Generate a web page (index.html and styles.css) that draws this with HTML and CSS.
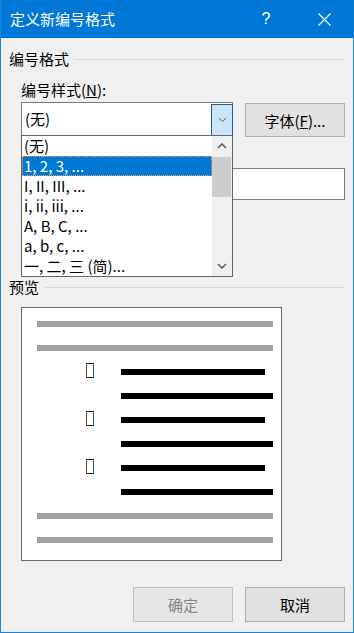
FILE: index.html
```html
<!DOCTYPE html>
<html lang="zh-CN">
<head>
  <meta charset="UTF-8" />
  <meta name="viewport" content="width=device-width, initial-scale=1.0"/>
  <title>定义新编号格式</title>
  <link rel="stylesheet" href="styles.css">
</head>
<body>

  <div class="window">
    <div class="titlebar">
      <div class="title">定义新编号格式</div>
      <div class="caption-btn help">?</div>
      <div class="caption-btn close">
        <svg width="13" height="13" viewBox="0 0 13 13">
          <path d="M0.5 0.5 L12.5 12.5 M12.5 0.5 L0.5 12.5" stroke="#fff" stroke-width="1.1" fill="none"/>
        </svg>
      </div>
    </div>

    <div class="content">
      <div class="group-head">
        <span>编号格式</span>
        <div class="group-line"></div>
      </div>

      <div class="field-label">编号样式(<u>N</u>):</div>
      <div class="combo-row">
        <div class="combo">
          <div class="combo-text">(无)</div>
          <div class="combo-btn">
            <svg width="9" height="6" viewBox="0 0 9 6">
              <path d="M1 1 L4.5 4.5 L8 1" stroke="#606060" stroke-width="1" fill="none"/>
            </svg>
          </div>

          <div class="droplist">
            <div class="items">
              <div class="item">(无)</div>
              <div class="item selected">1, 2, 3, ...</div>
              <div class="item">I, II, III, ...</div>
              <div class="item">i, ii, iii, ...</div>
              <div class="item">A, B, C, ...</div>
              <div class="item">a, b, c, ...</div>
              <div class="item">一, 二, 三 (简)...</div>
            </div>
            <div class="scrollbar">
              <div class="scroll-arrow">
                <svg width="10" height="6" viewBox="0 0 10 6">
                  <path d="M1 5 L5 1 L9 5" stroke="#606060" stroke-width="1.6" fill="none"/>
                </svg>
              </div>
              <div class="thumb"></div>
              <div class="scroll-space"></div>
              <div class="scroll-arrow">
                <svg width="10" height="6" viewBox="0 0 10 6">
                  <path d="M1 1 L5 5 L9 1" stroke="#606060" stroke-width="1.6" fill="none"/>
                </svg>
              </div>
            </div>
          </div>
        </div>
        <button class="btn">字体(<u>F</u>)...</button>
      </div>

      <!-- label for the format box sits under the open list -->
      <div class="field-label second"></div>
      <div class="textbox"></div>

      <div class="field-label second"></div>
      <div class="combo small"></div>

      <div class="group-head preview-head">
        <span>预览</span>
        <div class="group-line"></div>
      </div>

      <div class="preview">
        <div class="bar gray"></div>
        <div class="bar gray"></div>
        <div class="prow"><span class="tofu"></span><div class="bar black short"></div></div>
        <div class="prow"><div class="bar black long"></div></div>
        <div class="prow"><span class="tofu"></span><div class="bar black short"></div></div>
        <div class="prow"><div class="bar black long"></div></div>
        <div class="prow"><span class="tofu"></span><div class="bar black short"></div></div>
        <div class="prow"><div class="bar black long"></div></div>
        <div class="bar gray"></div>
        <div class="bar gray"></div>
      </div>
    </div>

    <div class="footer">
      <button class="btn big" disabled>确定</button>
      <button class="btn big">取消</button>
    </div>
  </div>

</body>
</html>
```

FILE: styles.css
```css
body {
  margin: 0;
  font-family: "Noto Sans CJK SC", "Noto Sans", sans-serif;
  font-size: 15px;
  color: #000;
  background: #f0f0f0;
}

.window {
  width: 354px;
  height: 633px;
  box-sizing: border-box;
  border: 1px solid #1883d7;
  border-top: none;
  background: #f0f0f0;
  display: flex;
  flex-direction: column;
}

.titlebar {
  height: 38px;
  background: #0078d7;
  color: white;
  display: flex;
  align-items: center;
  padding-left: 9px;
}

.title {
  flex: 1;
  line-height: 38px;
}

.caption-btn {
  width: 58px;
  height: 38px;
  display: flex;
  align-items: center;
  justify-content: center;
}

.help {
  font-family: "Liberation Sans", sans-serif;
  font-size: 16px;
}

.content {
  padding: 0 8px;
}

.group-head {
  margin-top: 11px;
  height: 20px;
  display: flex;
  align-items: center;
  gap: 5px;
  line-height: 20px;
}

.group-line {
  flex: 1;
  height: 1px;
  background: #dcdcdc;
}

.field-label {
  margin-top: 11px;
  height: 20px;
  line-height: 20px;
  padding-left: 12px;
}

.field-label.second {
  margin-top: 9px;
}

.combo-row {
  margin-top: 2px;
  padding-left: 12px;
  display: flex;
  gap: 12px;
  align-items: flex-start;
}

.combo {
  position: relative;
  width: 212px;
  height: 34px;
  box-sizing: border-box;
  border: 1px solid #7a7a7a;
  background: white;
  display: flex;
}

.combo.small {
  margin: 2px 0 0 12px;
  width: 180px;
}

.combo-text {
  flex: 1;
  padding-left: 3px;
  line-height: 31px;
}

.combo-btn {
  width: 22px;
  box-sizing: border-box;
  margin: 1px -1px -1px 0;
  border: 1px solid #1f5f99;
  background: #cce4f7;
  display: flex;
  align-items: center;
  justify-content: center;
}

.droplist {
  position: absolute;
  top: 32px;
  left: -1px;
  width: 212px;
  height: 142px;
  box-sizing: border-box;
  border: 1px solid #646464;
  background: white;
  display: flex;
  z-index: 5;
}

.items {
  width: 190px;
  overflow: hidden;
}

.item {
  height: 20px;
  line-height: 20px;
  padding-left: 2px;
  white-space: nowrap;
}

.item.selected {
  background: #0078d7;
  color: white;
  outline: 1px dotted #f5a040;
  outline-offset: -1px;
}

.scrollbar {
  width: 20px;
  background: #f0f0f0;
  display: flex;
  flex-direction: column;
}

.scroll-arrow {
  height: 20px;
  display: flex;
  align-items: center;
  justify-content: center;
}

.thumb {
  margin-top: 1px;
  height: 40px;
  width: 19px;
  background: #cdcdcd;
}

.scroll-space {
  flex: 1;
}

.btn {
  font-family: "Noto Sans CJK SC", "Noto Sans", sans-serif;
  font-size: 15px;
  color: #000;
  width: 100px;
  height: 34px;
  margin-top: 1px;
  padding: 0;
  background: #e1e1e1;
  border: 1px solid #adadad;
}

.btn.big {
  height: 35px;
  margin-top: 0;
}

.btn:disabled {
  background: #e6e6e6;
  border-color: #bfbfbf;
  color: #838383;
}

.textbox {
  margin: 2px 0 0 12px;
  height: 32px;
  box-sizing: border-box;
  border: 1px solid #7a7a7a;
  background: white;
}

.preview-head {
  margin-top: 12px;
}

.preview {
  margin: 10px 0 0 12px;
  width: 261px;
  height: 254px;
  box-sizing: border-box;
  border: 1px solid #696969;
  background: white;
  padding: 13px 0 0 15px;
  display: flex;
  flex-direction: column;
  gap: 18px;
}

.bar {
  height: 6px;
  flex-shrink: 0;
}

.bar.gray {
  width: 236px;
  background: #a0a0a0;
}

.bar.black {
  background: #000;
}

.bar.short {
  width: 144px;
}

.bar.long {
  width: 152px;
  margin-left: 35px;
}

.prow {
  height: 6px;
  display: flex;
  align-items: flex-start;
  padding-left: 49px;
}

.tofu {
  flex-shrink: 0;
  width: 8px;
  height: 15px;
  box-sizing: border-box;
  margin: -6px 27px 0 0;
  border: 1px solid #1a1a1a;
  border-left-color: #7a4a10;
  border-right-color: #1a5aa0;
}

.footer {
  margin-top: auto;
  padding: 0 8px 10px 0;
  display: flex;
  justify-content: flex-end;
  gap: 12px;
}
```
